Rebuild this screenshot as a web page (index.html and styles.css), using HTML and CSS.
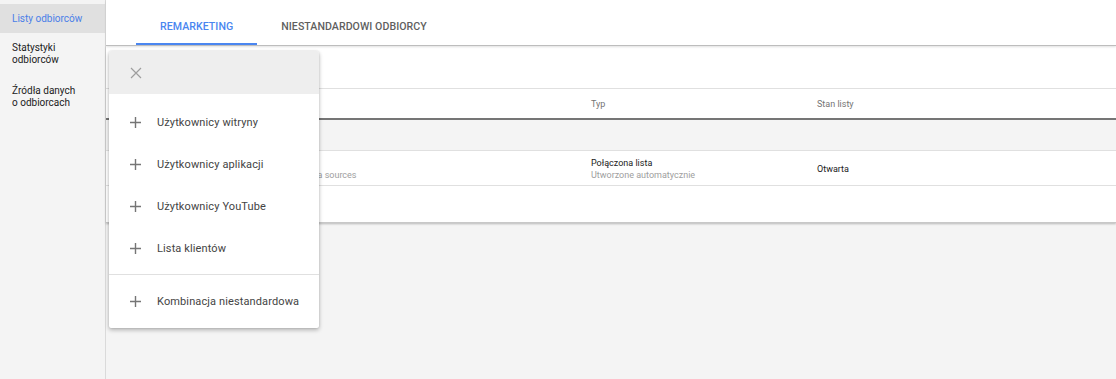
FILE: index.html
```html
<!DOCTYPE html>
<html lang="pl">
<head>
<meta charset="utf-8">
<title>Listy odbiorców</title>
<link rel="stylesheet" href="styles.css">
</head>
<body>
<div class="app">
  <nav class="sidebar">
    <div class="nav-item active">Listy odbiorców</div>
    <div class="nav-item">Statystyki<br>odbiorców</div>
    <div class="nav-item">Źródła danych<br>o odbiorcach</div>
  </nav>
  <main class="main">
    <header class="tabs">
      <div class="tab active">REMARKETING</div>
      <div class="tab">NIESTANDARDOWI ODBIORCY</div>
    </header>
    <section class="card">
      <div class="toolbar"></div>
      <div class="row head">
        <div class="cell">Nazwa listy odbiorców</div>
        <div class="cell">Typ</div>
        <div class="cell">Stan listy</div>
      </div>
      <div class="row summary"></div>
      <div class="row data">
        <div class="cell">
          <div class="title">Wszyscy użytkownicy</div>
          <div class="sub">Combined audience from all data sources</div>
        </div>
        <div class="cell">
          <div class="title">Połączona lista</div>
          <div class="sub">Utworzone automatycznie</div>
        </div>
        <div class="cell"><div class="title">Otwarta</div></div>
      </div>
      <div class="row empty"></div>
    </section>

    <div class="menu">
      <div class="menu-head">
        <svg class="close" width="12" height="12" viewBox="0 0 12 12"><path d="M1 1L11 11M11 1L1 11" stroke="#9e9e9e" stroke-width="1.2" fill="none"/></svg>
      </div>
      <div class="menu-group">
        <div class="menu-item"><svg class="plus" width="11" height="11" viewBox="0 0 11 11"><path d="M5.5 0V11M0 5.5H11" stroke="#757575" stroke-width="1.4" fill="none"/></svg><span>Użytkownicy witryny</span></div>
        <div class="menu-item"><svg class="plus" width="11" height="11" viewBox="0 0 11 11"><path d="M5.5 0V11M0 5.5H11" stroke="#757575" stroke-width="1.4" fill="none"/></svg><span>Użytkownicy aplikacji</span></div>
        <div class="menu-item"><svg class="plus" width="11" height="11" viewBox="0 0 11 11"><path d="M5.5 0V11M0 5.5H11" stroke="#757575" stroke-width="1.4" fill="none"/></svg><span>Użytkownicy YouTube</span></div>
        <div class="menu-item"><svg class="plus" width="11" height="11" viewBox="0 0 11 11"><path d="M5.5 0V11M0 5.5H11" stroke="#757575" stroke-width="1.4" fill="none"/></svg><span>Lista klientów</span></div>
      </div>
      <div class="menu-group last">
        <div class="menu-item"><svg class="plus" width="11" height="11" viewBox="0 0 11 11"><path d="M5.5 0V11M0 5.5H11" stroke="#757575" stroke-width="1.4" fill="none"/></svg><span>Kombinacja niestandardowa</span></div>
      </div>
    </div>
  </main>
</div>
</body>
</html>
```

FILE: styles.css
```css
* { box-sizing: border-box; }
html, body { margin: 0; padding: 0; }
body {
  background: #f4f4f4;
  font-family: Roboto, "Liberation Sans", Arial, sans-serif;
  color: #212121;
  width: 1116px;
  height: 379px;
  overflow: hidden;
}
.app { display: flex; height: 379px; }

.sidebar {
  width: 106px;
  flex: none;
  background: #f4f4f4;
  border-right: 1px solid #dadada;
  padding-top: 4px;
  font-size: 10px;
}
.nav-item {
  padding: 9px 12px 10px;
  line-height: 12px;
  color: #212121;
}
.nav-item.active {
  height: 29px;
  padding: 0 12px;
  display: flex;
  align-items: center;
  background: #e0e0e0;
  color: #4a7fe8;
}

.main { flex: 1; position: relative; min-width: 0; }

.tabs {
  height: 46px;
  background: #fff;
  display: flex;
  padding-left: 30px;
  border-bottom: 1px solid #bdbdbd;
  box-shadow: 0 1px 2px rgba(0,0,0,0.12);
  position: relative;
  z-index: 1;
}
.tab {
  padding: 0 24px;
  display: flex;
  align-items: center;
  font-size: 10.6px;
  font-weight: 500;
  letter-spacing: 0.05px;
  color: #5f5f5f;
  padding-top: 9px;
  border-bottom: 2px solid transparent;
}
.tab.active { color: #4a86f0; border-bottom-color: #4a86f0; }

.card {
  background: #fff;
  box-shadow: 0 1px 2px rgba(0,0,0,0.25);
  border-bottom: 1px solid #c8c8c8;
}
.toolbar { height: 43px; border-bottom: 1px solid #e0e0e0; }
.row {
  display: grid;
  grid-template-columns: 401px 226px 1fr;
  padding-left: 84px;
  align-items: center;
}
.row.head {
  height: 31px;
  border-bottom: 2px solid #757575;
  font-size: 9px;
  color: #757575;
}
.row.summary { height: 31px; background: #f4f4f4; border-bottom: 1px solid #e0e0e0; }
.row.data { height: 35px; border-bottom: 1px solid #e0e0e0; font-size: 9px; padding-top: 1px; }
.row.empty { height: 36px; }
.title { color: #212121; line-height: 12px; }
.sub { color: #9e9e9e; line-height: 12px; }

.menu {
  position: absolute;
  left: 3px;
  top: 51px;
  width: 210px;
  background: #fff;
  box-shadow: 0 2px 4px rgba(0,0,0,0.28), 0 0 2px rgba(0,0,0,0.12);
  border-radius: 2px;
  z-index: 2;
}
.menu-head {
  height: 43px;
  background: #eeeeee;
  display: flex;
  align-items: center;
  padding-left: 21px;
  border-radius: 2px 2px 0 0;
}
.menu-group { padding: 7px 0 5px; border-bottom: 1px solid #e0e0e0; }
.menu-group.last { padding: 5px 0 6px; border-bottom: none; }
.menu-item {
  height: 42px;
  display: flex;
  align-items: center;
  padding-left: 21px;
  font-size: 11px;
  letter-spacing: 0.12px;
  color: #444;
}
.plus { flex: none; margin-right: 16px; }
```
